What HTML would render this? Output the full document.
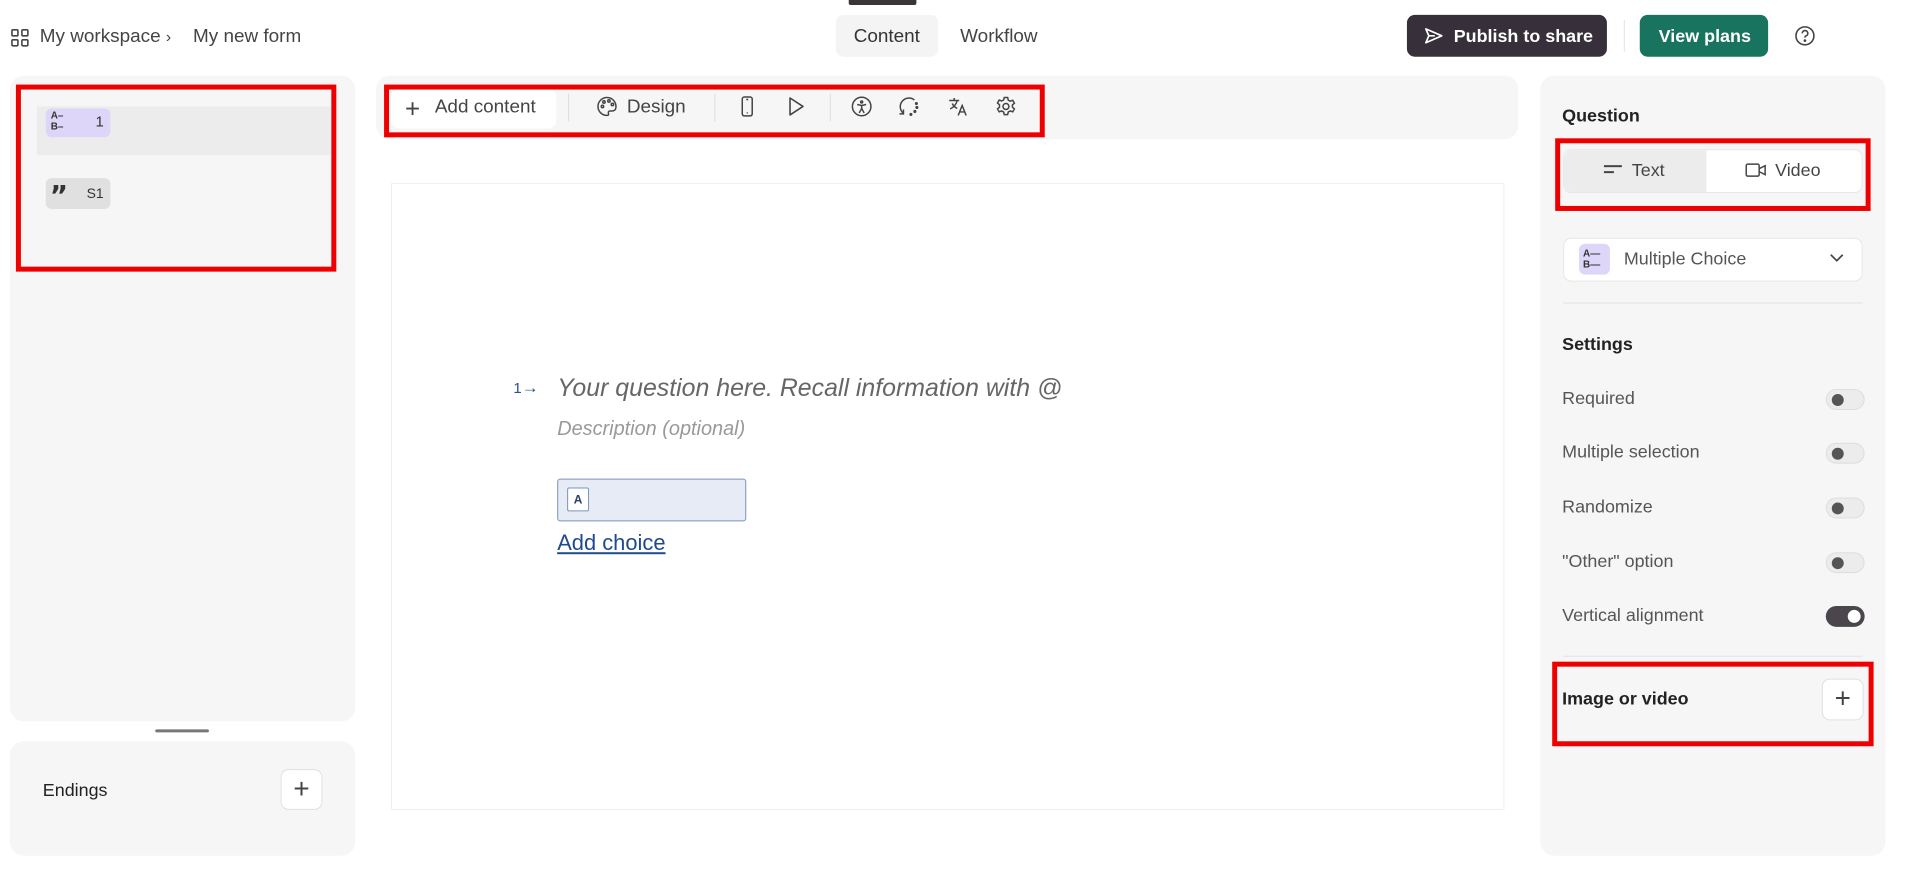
<!DOCTYPE html>
<html><head><meta charset="utf-8"><style>
*{box-sizing:border-box;margin:0;padding:0}
body{width:1905px;height:872px;background:#fff;font-family:"Liberation Sans",sans-serif;color:#333;position:relative;overflow:hidden}
#w{position:absolute;left:0;top:0;width:1905px;height:872px;transform:scale(0.995);transform-origin:0 0}
.a{position:absolute}
.red{position:absolute;border:5px solid #e00;}
.tog{position:absolute;left:1835px;width:39px;height:21px;border-radius:11px;background:#ececec;border:1px solid #ddd}
.tog::after{content:"";position:absolute;left:5px;top:4px;width:12px;height:12px;border-radius:50%;background:#555}
.lab{position:absolute;left:1570px;font-size:18px;color:#555}
.ic{position:absolute;top:96px}
svg{display:block}
</style></head><body><div id="w">
<div class="a" style="left:853px;top:0;width:68px;height:5px;background:#3a3338;border-radius:0 0 2px 2px"></div>
<svg class="a" style="left:10px;top:28px" width="20" height="20" viewBox="0 0 20 20" fill="none" stroke="#444" stroke-width="1.6"><rect x="2" y="2" width="6" height="6" rx="1"/><rect x="12" y="2" width="6" height="6" rx="1"/><rect x="2" y="12" width="6" height="6" rx="1"/><rect x="12" y="12" width="6" height="6" rx="1"/></svg>
<div class="a" style="left:40px;top:26px;font-size:19px;color:#444">My workspace <span style="font-size:16px">›</span></div>
<div class="a" style="left:194px;top:26px;font-size:19px;color:#444">My new form</div>
<div class="a" style="left:840px;top:15px;width:103px;height:42px;border-radius:8px;background:#f4f4f4"></div>
<div class="a" style="left:858px;top:26px;font-size:19px;color:#333">Content</div>
<div class="a" style="left:965px;top:26px;font-size:19px;color:#444">Workflow</div>
<div class="a" style="left:1414px;top:15px;width:201px;height:42px;border-radius:8px;background:#37303a;color:#fff;font-size:18px;font-weight:bold;padding:11px 0 0 47px">Publish to share</div>
<svg class="a" style="left:1431px;top:27px" width="20" height="18" viewBox="0 0 20 18" fill="none" stroke="#fff" stroke-width="1.7" stroke-linejoin="round"><path d="M2 2 L18 9 L2 16 L5 9 Z M5 9 H11"/></svg>
<div class="a" style="left:1632px;top:20px;width:1px;height:32px;background:#e4e4e4"></div>
<div class="a" style="left:1648px;top:15px;width:129px;height:42px;border-radius:8px;background:#18735f;color:#fff;font-size:18px;font-weight:bold;padding:11px 0 0 19px">View plans</div>
<svg class="a" style="left:1803px;top:25px" width="22" height="22" viewBox="0 0 22 22" fill="none" stroke="#444" stroke-width="1.6"><circle cx="11" cy="11" r="9"/><path d="M8.3 8.5a2.8 2.8 0 1 1 3.8 2.6c-.8.3-1.1.9-1.1 1.7"/><circle cx="11" cy="15.8" r=".6" fill="#444"/></svg>

<div class="a" style="left:10px;top:76px;width:347px;height:649px;background:#f6f6f6;border-radius:14px"></div>
<div class="a" style="left:37px;top:107px;width:295px;height:49px;background:#ececec"></div>
<div class="a" style="left:46px;top:109px;width:65px;height:29px;border-radius:6px;background:#ddd6f8"></div>
<div class="a" style="left:51px;top:111px;font-size:10px;font-weight:bold;line-height:11px;color:#333">A–<br>B–</div>
<div class="a" style="left:96px;top:114px;font-size:15px;color:#333">1</div>
<div class="a" style="left:46px;top:179px;width:65px;height:31px;border-radius:6px;background:#e0e0e0"></div>
<div class="a" style="left:50px;top:180px;font-size:28px;font-weight:bold;color:#333;font-family:'DejaVu Sans',sans-serif;line-height:34px">”</div>
<div class="a" style="left:87px;top:186px;font-size:14px;color:#333">S1</div>
<div class="red" style="left:16px;top:85px;width:322px;height:188px"></div>
<div class="a" style="left:156px;top:733px;width:54px;height:3px;background:#777;border-radius:2px"></div>
<div class="a" style="left:10px;top:745px;width:347px;height:115px;background:#f6f6f6;border-radius:14px"></div>
<div class="a" style="left:43px;top:784px;font-size:18px;color:#222">Endings</div>
<div class="a" style="left:282px;top:773px;width:42px;height:41px;border-radius:8px;background:#fff;border:1px solid #e0e0e0;font-size:28px;color:#444;text-align:center;line-height:37px;font-weight:300">+</div>

<div class="a" style="left:378px;top:76px;width:1148px;height:64px;background:#f6f6f6;border-radius:14px"></div>
<div class="a" style="left:393px;top:89px;width:166px;height:40px;background:#fff;border-radius:8px"></div>
<div class="a" style="left:407px;top:94px;font-size:26px;color:#444;font-weight:300">+</div>
<div class="a" style="left:437px;top:97px;font-size:19px;color:#444">Add content</div>
<div class="a" style="left:571px;top:94px;width:1px;height:28px;background:#ddd"></div>
<svg class="ic" style="left:599px" width="22" height="22" viewBox="0 0 22 22" fill="none" stroke="#444" stroke-width="1.5"><path d="M11 2a9 9 0 0 0 0 18c1.5 0 2-1 1.5-2s0-2.5 1.5-2.5h2.5A3.5 3.5 0 0 0 20 12 9 9 0 0 0 11 2z"/><circle cx="6.5" cy="11" r="1.2"/><circle cx="8" cy="6.5" r="1.2"/><circle cx="13" cy="5.5" r="1.2"/><circle cx="16.5" cy="9" r="1.2"/></svg>
<div class="a" style="left:630px;top:97px;font-size:19px;color:#444">Design</div>
<div class="a" style="left:718px;top:94px;width:1px;height:28px;background:#ddd"></div>
<svg class="ic" style="left:740px" width="22" height="22" viewBox="0 0 22 22" fill="none" stroke="#444" stroke-width="1.5"><rect x="6" y="1.5" width="10" height="19" rx="2"/><path d="M10 4h2M10.5 17.5h1"/></svg>
<svg class="ic" style="left:789px" width="22" height="22" viewBox="0 0 22 22" fill="none" stroke="#444" stroke-width="1.6" stroke-linejoin="round"><path d="M5 2.5v17L18 11z"/></svg>
<div class="a" style="left:834px;top:94px;width:1px;height:28px;background:#ddd"></div>
<svg class="ic" style="left:855px" width="22" height="22" viewBox="0 0 22 22" fill="none" stroke="#444" stroke-width="1.5"><circle cx="11" cy="11" r="9.3"/><circle cx="11" cy="6.5" r="1"/><path d="M6.5 9l4.5 1 4.5-1M11 10v3l-2.5 4.5M11 13l2.5 4.5"/></svg>
<svg class="ic" style="left:902px" width="22" height="22" viewBox="0 0 22 22" fill="none" stroke="#444" stroke-width="1.5"><path d="M6 18A8.5 8.5 0 1 1 17 4.5" /><path d="M6 14v4.5H2"/><circle cx="19" cy="8" r=".8" fill="#444"/><circle cx="19.5" cy="12" r=".8" fill="#444"/><circle cx="17.5" cy="16" r=".8" fill="#444"/><circle cx="13.5" cy="19" r=".8" fill="#444"/></svg>
<svg class="ic" style="left:952px" width="22" height="22" viewBox="0 0 22 22" fill="none" stroke="#444" stroke-width="1.5"><path d="M2 5h10M7 2.5V5M10 5c-1 4-4 7-7 8.5M5 8c1 2 3 4 5 5M11 20l4-10 4 10M12.5 16.5h5"/></svg>
<svg class="ic" style="left:1000px" width="22" height="22" viewBox="0 0 22 22" fill="none" stroke="#444" stroke-width="1.5"><circle cx="11" cy="11" r="3"/><path d="M9.3 2h3.4l.6 2.6 2 1.1 2.5-.9 1.7 2.9-2 1.8v2.2l2 1.8-1.7 2.9-2.5-.9-2 1.1-.6 2.6H9.3l-.6-2.6-2-1.1-2.5.9-1.7-2.9 2-1.8V9.3l-2-1.8L4.2 4.6l2.5.9 2-1.1z"/></svg>
<div class="red" style="left:386px;top:85px;width:664px;height:53px"></div>

<div class="a" style="left:393px;top:184px;width:1119px;height:630px;border:1px solid #eee;background:#fff"></div>
<div class="a" style="left:516px;top:380px;font-size:15px;color:#2d4f8f">1<span style="font-size:17px">→</span></div>
<div class="a" style="left:560px;top:376px;font-size:25px;font-style:italic;color:#666">Your question here. Recall information with @</div>
<div class="a" style="left:560px;top:420px;font-size:20px;font-style:italic;color:#999">Description (optional)</div>
<div class="a" style="left:560px;top:481px;width:190px;height:43px;border:1px solid #7b93b8;border-radius:3px;background:#e7ebf5"></div>
<div class="a" style="left:570px;top:490px;width:22px;height:24px;border:1px solid #7b93b8;background:#fff;border-radius:2px;font-size:12px;font-weight:bold;text-align:center;line-height:22px;color:#2a3e66">A</div>
<div class="a" style="left:560px;top:533px;font-size:22px;color:#1f4a8c;text-decoration:underline">Add choice</div>

<div class="a" style="left:1548px;top:76px;width:347px;height:784px;background:#f6f6f6;border-radius:14px"></div>
<div class="a" style="left:1570px;top:106px;font-size:18px;font-weight:bold;color:#222">Question</div>
<div class="a" style="left:1571px;top:150px;width:301px;height:44px;border-radius:8px;background:#fff;border:1px solid #e6e6e6"></div>
<div class="a" style="left:1572px;top:151px;width:143px;height:42px;border-radius:8px 0 0 8px;background:#ececec"></div>
<div class="a" style="left:1612px;top:166px;width:18px;height:2px;background:#444"></div>
<div class="a" style="left:1612px;top:172px;width:10px;height:2px;background:#444"></div>
<div class="a" style="left:1640px;top:161px;font-size:18px;color:#444">Text</div>
<svg class="a" style="left:1754px;top:163px" width="22" height="16" viewBox="0 0 22 16" fill="none" stroke="#444" stroke-width="1.5"><rect x="1" y="2" width="13" height="12" rx="1.5"/><path d="M14 6.5l6-3v9l-6-3"/></svg>
<div class="a" style="left:1784px;top:161px;font-size:18px;color:#444">Video</div>
<div class="red" style="left:1563px;top:139px;width:317px;height:73px"></div>
<div class="a" style="left:1571px;top:239px;width:301px;height:44px;border-radius:8px;background:#fff;border:1px solid #e6e6e6"></div>
<div class="a" style="left:1587px;top:245px;width:31px;height:31px;border-radius:6px;background:#ddd6f8"></div>
<div class="a" style="left:1591px;top:250px;font-size:10px;font-weight:bold;line-height:11px;color:#333">A—<br>B—</div>
<div class="a" style="left:1632px;top:250px;font-size:18px;color:#555">Multiple Choice</div>
<svg class="a" style="left:1838px;top:253px" width="16" height="12" viewBox="0 0 16 12" fill="none" stroke="#444" stroke-width="1.7"><path d="M2 3l6 6 6-6"/></svg>
<div class="a" style="left:1571px;top:304px;width:301px;height:1px;background:#e2e2e2"></div>
<div class="a" style="left:1570px;top:336px;font-size:18px;font-weight:bold;color:#222">Settings</div>
<div class="lab" style="top:390px">Required</div><div class="tog" style="top:391px"></div>
<div class="lab" style="top:444px">Multiple selection</div><div class="tog" style="top:445px"></div>
<div class="lab" style="top:499px">Randomize</div><div class="tog" style="top:500px"></div>
<div class="lab" style="top:554px">"Other" option</div><div class="tog" style="top:555px"></div>
<div class="lab" style="top:608px">Vertical alignment</div>
<div class="a" style="left:1835px;top:609px;width:39px;height:21px;border-radius:11px;background:#4a464c"><div class="a" style="left:22px;top:4px;width:13px;height:13px;border-radius:50%;background:#fff"></div></div>
<div class="a" style="left:1571px;top:659px;width:301px;height:1px;background:#e2e2e2"></div>
<div class="a" style="left:1570px;top:692px;font-size:18px;font-weight:bold;color:#222">Image or video</div>
<div class="a" style="left:1831px;top:682px;width:42px;height:42px;border-radius:8px;background:#fff;border:1px solid #e0e0e0;font-size:28px;color:#444;text-align:center;line-height:38px;font-weight:300">+</div>
<div class="red" style="left:1560px;top:665px;width:323px;height:85px"></div>
</div></body></html>
